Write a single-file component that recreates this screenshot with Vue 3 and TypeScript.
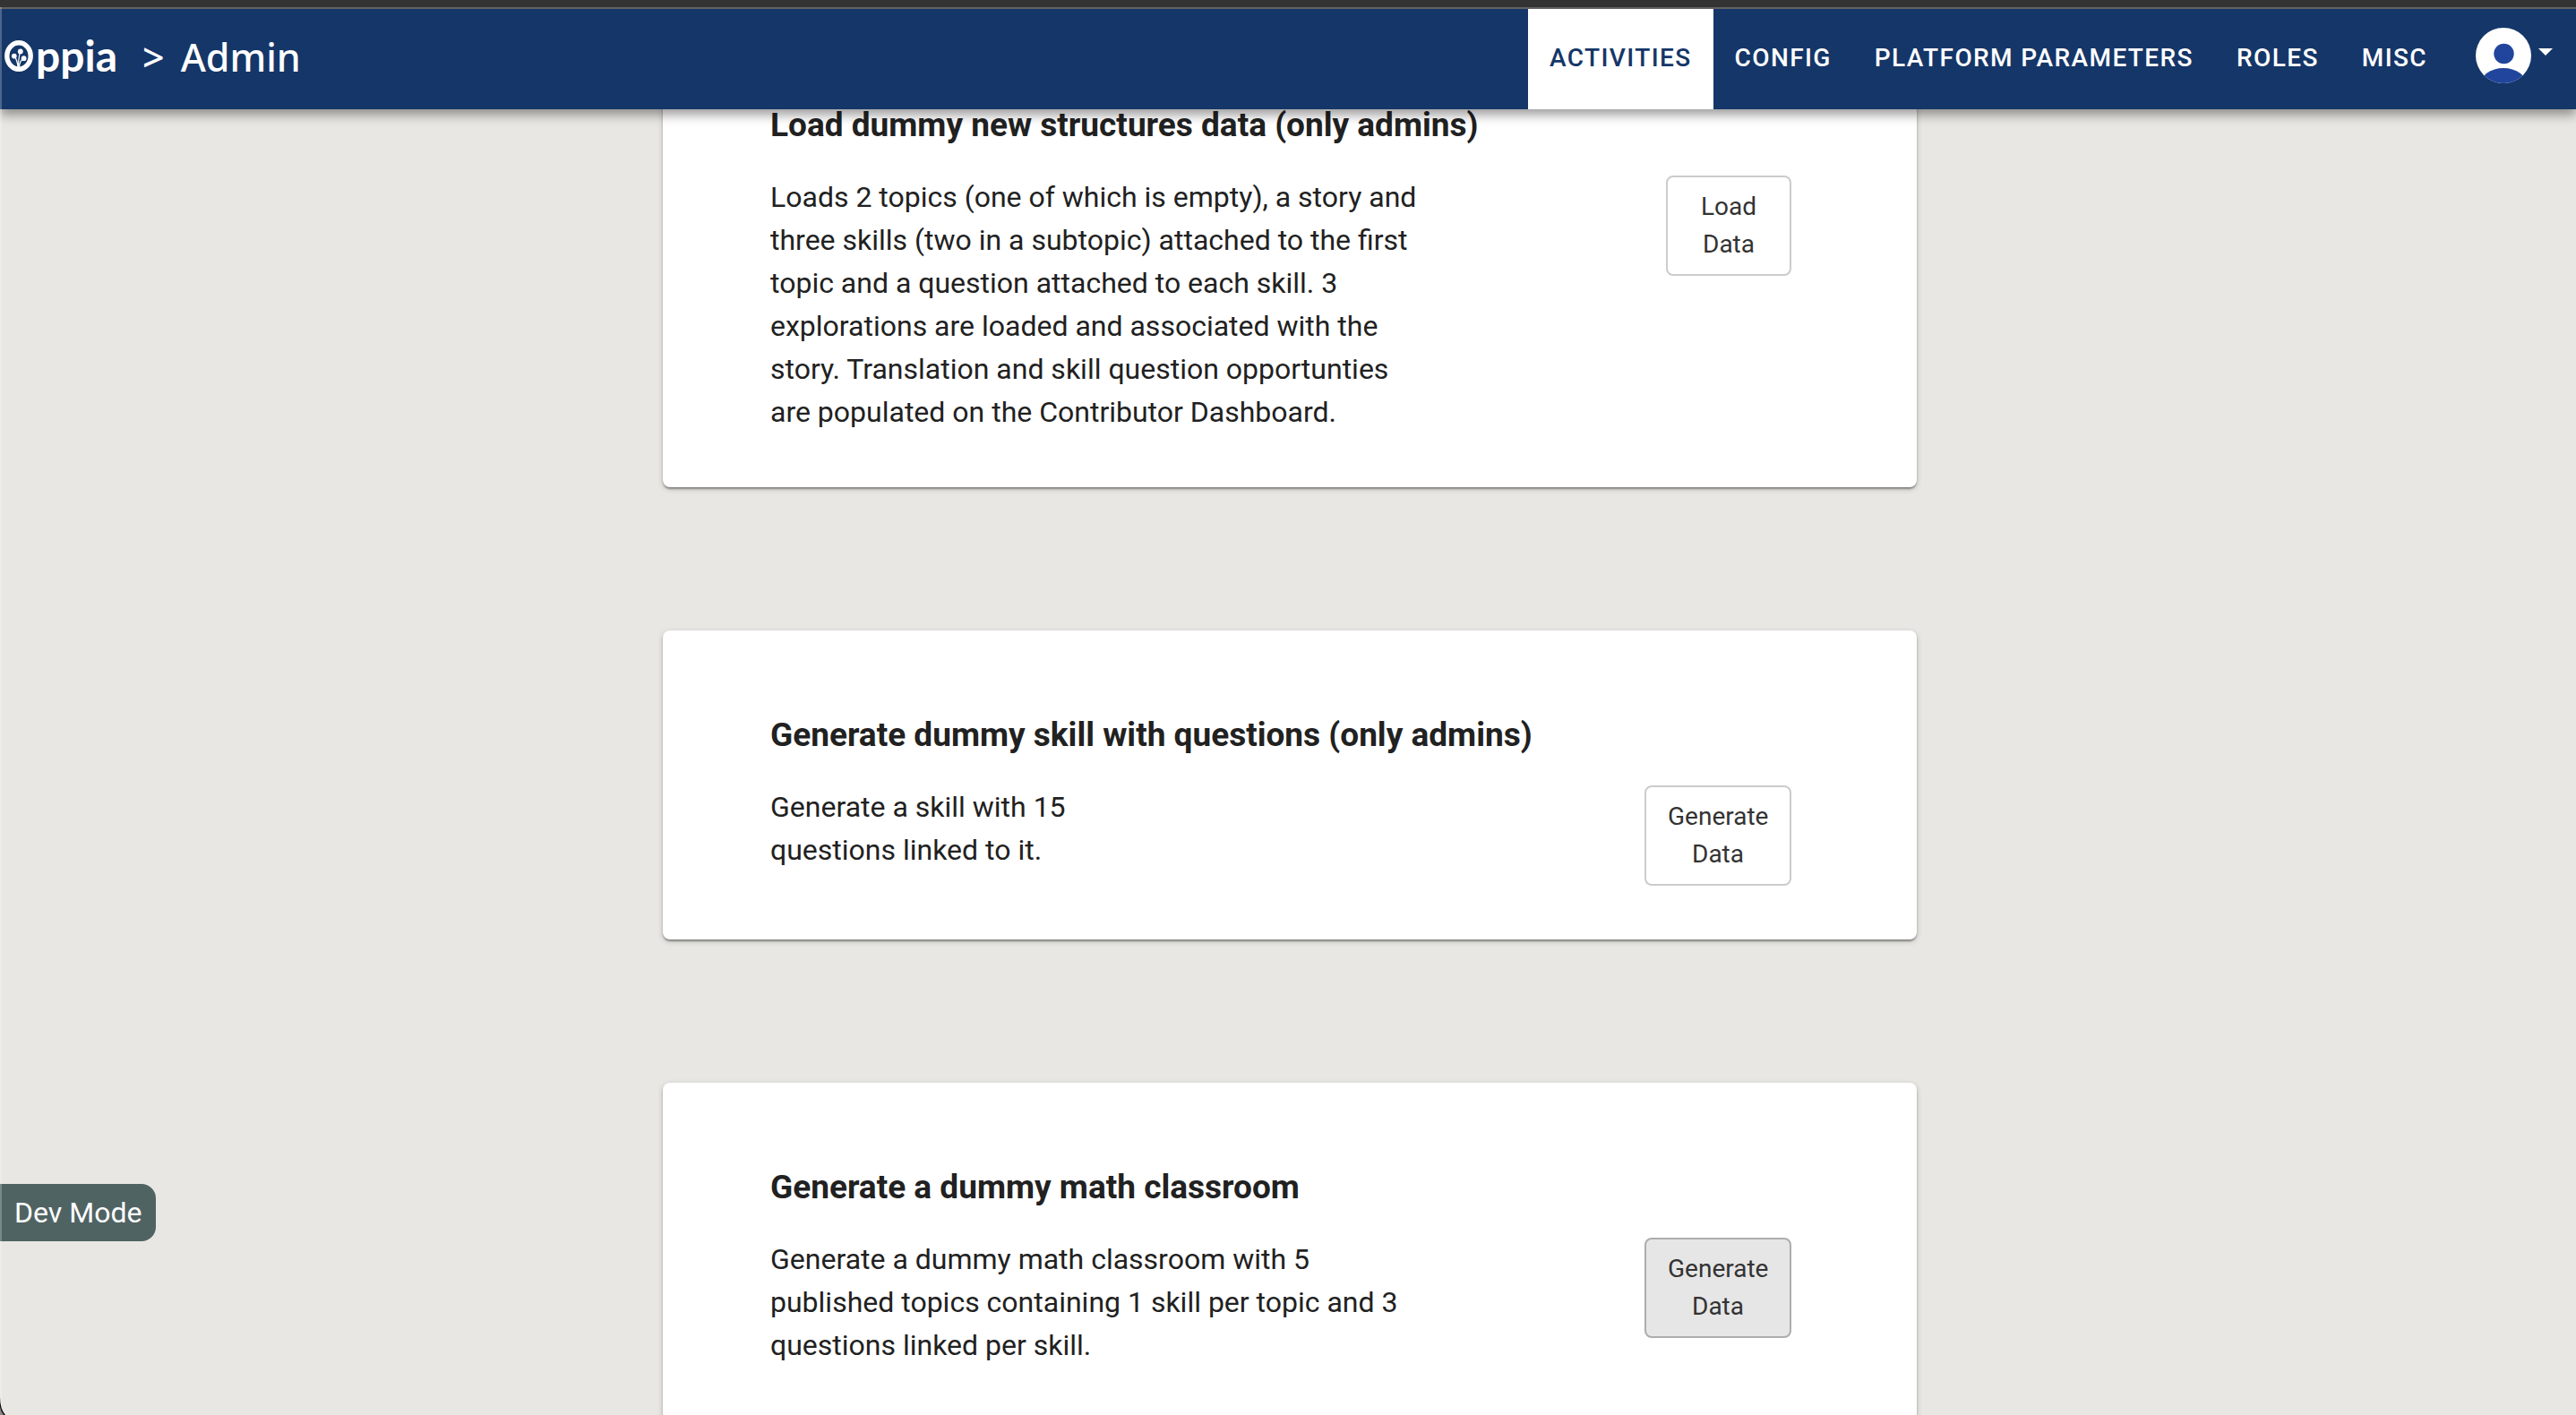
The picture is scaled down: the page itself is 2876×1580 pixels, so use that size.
<script setup lang="ts">
interface Tab {
  label: string
  active?: boolean
}

interface Activity {
  title: string
  description: string
  action: string
  narrow?: boolean
  hovered?: boolean
}

const tabs: Tab[] = [
  { label: 'ACTIVITIES', active: true },
  { label: 'CONFIG' },
  { label: 'PLATFORM PARAMETERS' },
  { label: 'ROLES' },
  { label: 'MISC' },
]

const activities: Activity[] = [
  {
    title: 'Load dummy new structures data (only admins)',
    description:
      'Loads 2 topics (one of which is empty), a story and three skills (two in a subtopic) attached to the first topic and a question attached to each skill. 3 explorations are loaded and associated with the story. Translation and skill question opportunties are populated on the Contributor Dashboard.',
    action: 'Load Data',
  },
  {
    title: 'Generate dummy skill with questions (only admins)',
    description: 'Generate a skill with 15 questions linked to it.',
    action: 'Generate Data',
    narrow: true,
  },
  {
    title: 'Generate a dummy math classroom',
    description:
      'Generate a dummy math classroom with 5 published topics containing 1 skill per topic and 3 questions linked per skill.',
    action: 'Generate Data',
    hovered: true,
  },
]
</script>

<template>
  <div class="page">
    <header class="top">
      <div class="window-edge"></div>
      <div class="navbar">
        <div class="brand">
          <a class="logo" href="#">
            <svg class="logo-o" viewBox="0 0 32 35" aria-hidden="true">
              <ellipse cx="16" cy="17.5" rx="13.2" ry="14.7" fill="none" stroke="#fff" stroke-width="5.4" />
              <g fill="#fff">
                <circle cx="17.8" cy="12.4" r="2.9" />
                <circle cx="10.8" cy="17.6" r="2.9" />
                <circle cx="21.6" cy="20.2" r="2.9" />
              </g>
              <g fill="none" stroke="#fff" stroke-width="1.2">
                <path d="M15.6 30Q15.4 20 17.6 13" />
                <path d="M15 30Q14.4 22 11 18" />
                <path d="M16.4 30Q17 23 21 20.6" />
              </g>
            </svg>
            <span class="logo-text">ppia</span>
          </a>
          <span class="crumb">&gt;</span>
          <span class="crumb">Admin</span>
        </div>
        <nav class="tabs">
          <a v-for="tab in tabs" :key="tab.label" href="#" class="tab" :class="{ active: tab.active }">{{ tab.label }}</a>
        </nav>
        <button type="button" class="profile" aria-label="Profile menu">
          <svg class="avatar" viewBox="0 0 62 62" aria-hidden="true">
            <defs>
              <clipPath id="avatar-clip"><circle cx="31" cy="31" r="31" /></clipPath>
            </defs>
            <g clip-path="url(#avatar-clip)">
              <rect width="62" height="62" fill="#fff" />
              <circle cx="31.5" cy="29" r="11.2" fill="#21459c" />
              <ellipse cx="31" cy="64" rx="26" ry="19" fill="#21459c" />
            </g>
          </svg>
          <svg class="caret" viewBox="0 0 16 8" aria-hidden="true"><path d="M0 0H16L8 8Z" fill="#fff" /></svg>
        </button>
      </div>
    </header>

    <main class="content">
      <section v-for="item in activities" :key="item.title" class="card">
        <h2 class="title">{{ item.title }}</h2>
        <div class="row">
          <p class="description" :class="{ narrow: item.narrow }">{{ item.description }}</p>
          <button type="button" class="action" :class="{ hovered: item.hovered, wide: item.action !== 'Load Data' }">
            {{ item.action }}
          </button>
        </div>
      </section>
    </main>

    <div class="dev-mode">Dev Mode</div>
    <div class="side-line"></div>
    <svg class="corner" viewBox="0 0 6 20" aria-hidden="true">
      <path d="M0 0Q0 13 6 20H0Z" fill="#111" />
      <path d="M0 11Q1 16 4 20H0Z" fill="#8a8a8a" />
    </svg>
  </div>
</template>

<style>
body {
  margin: 0;
  background: #e8e7e3;
}
</style>

<style scoped>
.page {
  height: 100vh;
  overflow: hidden;
  background: #e8e7e3;
  color: #212121;
  font-family: Roboto, "Liberation Sans", sans-serif;
}

.top {
  position: fixed;
  top: 0;
  left: 0;
  right: 0;
  z-index: 2;
  box-shadow: 0 6px 12px rgba(0, 0, 0, 0.4);
}

.window-edge {
  height: 8px;
  background: #333;
  border-bottom: 2px solid #626262;
}

.navbar {
  display: flex;
  align-items: center;
  height: 112px;
  padding-right: 26px;
  background: #153668;
}

.brand {
  display: flex;
  align-items: center;
  gap: 18px;
  padding: 0 0 4px 5px;
  color: #fff;
}

.logo {
  display: flex;
  align-items: center;
  gap: 3px;
  margin-right: 10px;
  padding-bottom: 4px;
  color: #fff;
  text-decoration: none;
}

.logo-o {
  width: 32px;
  height: 35px;
}

.logo-text {
  font: 700 48px/50px Lato, "Noto Sans", sans-serif;
}

.crumb {
  font: 500 43px/56px "Noto Sans", "Open Sans", sans-serif;
}

.tabs {
  display: flex;
  margin-left: auto;
}

.tab {
  box-sizing: border-box;
  height: 112px;
  padding: 0 24px;
  color: #fff;
  font-size: 28px;
  font-weight: 500;
  line-height: 110px;
  letter-spacing: 0.05em;
  text-decoration: none;
  white-space: nowrap;
}

.tab.active {
  background: #fff;
  color: #153668;
}

.profile {
  display: flex;
  align-items: center;
  gap: 8px;
  margin-left: 30px;
  padding: 0 0 8px;
  border: 0;
  background: none;
}

.avatar {
  width: 62px;
  height: 62px;
}

.caret {
  width: 16px;
  height: 8px;
  margin-bottom: 8px;
}

.content {
  display: flex;
  flex-direction: column;
  gap: 160px;
  max-width: 1400px;
  margin: 0 auto;
  padding: 23px 0 160px 4px;
}

.card {
  padding: 91px 140px 60px 120px;
  border-radius: 8px;
  background: #fff;
  box-shadow:
    0 2px 6px rgba(0, 0, 0, 0.2),
    0 2px 2px rgba(0, 0, 0, 0.24),
    0 4px 2px -2px rgba(0, 0, 0, 0.12);
}

.title {
  margin: 0 0 30px;
  font-size: 37px;
  font-weight: 700;
  line-height: 52px;
}

.row {
  display: flex;
  align-items: flex-start;
  justify-content: space-between;
}

.description {
  max-width: 730px;
  margin: 0;
  font-size: 32px;
  line-height: 48px;
}

.description.narrow {
  max-width: 360px;
}

.action {
  box-sizing: border-box;
  width: 140px;
  padding: 12px 24px;
  border: 2px solid #ccc;
  border-radius: 8px;
  background: #fff;
  color: #333;
  font-family: inherit;
  font-size: 28px;
  line-height: 42px;
}

.action.wide {
  width: 164px;
}

.action.hovered {
  border-color: #adadad;
  background: #e6e6e6;
}

.dev-mode {
  position: fixed;
  bottom: 194px;
  left: 0;
  z-index: 3;
  padding: 8px 16px;
  border-radius: 0 16px 16px 0;
  background: #506363;
  color: #fff;
  font-size: 32px;
  line-height: 48px;
}

.side-line {
  position: fixed;
  top: 8px;
  bottom: 0;
  left: 0;
  z-index: 4;
  width: 2px;
  background: rgba(255, 255, 255, 0.24);
}

.corner {
  position: fixed;
  bottom: 0;
  left: 0;
  z-index: 5;
  width: 6px;
  height: 20px;
}
</style>
